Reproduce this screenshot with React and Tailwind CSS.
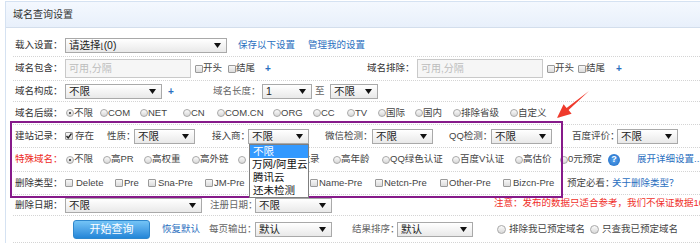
import React from "react";

const F = "font-['Liberation_Sans','Noto_Sans_CJK_SC',sans-serif]";
const LINK = "text-[#2a6fc0]";

function L({ w = "", className = "", children }) {
  return <span className={`shrink-0 whitespace-nowrap ${w} ${className}`}>{children}</span>;
}

function Arrow() {
  return (
    <svg width="7" height="5" viewBox="0 0 7 5" className="absolute right-[5px] top-[4px]">
      <polygon points="0,0 7,0 3.5,5" fill="#111" />
    </svg>
  );
}

function Sel({ w, children }) {
  return (
    <div className={`relative ${w} h-[15px] shrink-0 border border-[#a9a9a9] bg-linear-to-b from-white to-[#e9e9e9] text-[10.5px] leading-[13px] text-[#222] pl-[3px] whitespace-nowrap overflow-hidden`}>
      {children}
      <Arrow />
    </div>
  );
}

function Inp({ w }) {
  return (
    <div className={`${w} h-[19px] shrink-0 border border-[#c9c9c9] bg-[#f6f6f6] text-[#bdbdbd] text-[10px] pl-[3px] flex items-center`}>
      可用,分隔
    </div>
  );
}

function Radio({ on, big }) {
  return (
    <span className={`relative inline-block shrink-0 rounded-full border border-[#a8a8a8] bg-linear-to-b from-[#fbfbfb] to-[#d8d8d8] ${big ? "w-[9px] h-[9px]" : "w-[8px] h-[8px]"}`}>
      {on && <span className="absolute left-[2px] top-[2px] w-[2px] h-[2px] rounded-full bg-[#222]" />}
    </span>
  );
}

function Check({ on }) {
  return (
    <span className="relative inline-block w-[8px] h-[8px] shrink-0 rounded-[1px] border border-[#9a9a9a] bg-linear-to-b from-[#f7f7f7] to-[#dcdcdc]">
      {on && (
        <svg width="8" height="8" viewBox="0 0 8 8" className="absolute left-[-1px] top-[-1px]">
          <polyline points="1.5,4 3.2,6 6.5,1.5" fill="none" stroke="#222" strokeWidth="1.3" />
        </svg>
      )}
    </span>
  );
}

function RItem({ w = "", on, className = "", children }) {
  return (
    <span className={`flex items-center shrink-0 ${w} ${className}`}>
      <Radio on={on} />
      <span>{children}</span>
    </span>
  );
}

function CItem({ w = "", on, gap = "", className = "", children }) {
  return (
    <span className={`flex items-center shrink-0 ${w} ${className}`}>
      <Check on={on} />
      <span className={gap}>{children}</span>
    </span>
  );
}

function Plus({ w = "" }) {
  return <span className={`shrink-0 ${w} text-[#2a6fc0] text-[10px] font-bold`}>+</span>;
}

function Row({ h, pt = "", children }) {
  return (
    <div className={`flex items-center ${h} ${pt} pl-[2px] border-b border-dotted border-[#d4d4d4] whitespace-nowrap`}>
      {children}
    </div>
  );
}

export default function App() {
  return (
    <div className={`relative w-[700px] h-[245px] overflow-hidden bg-white text-[9.5px] text-[#444] ${F}`}>
      <div className="ml-[5px] mt-[1px] border-l border-t border-[#d5e2f2]">
        <div className="h-[26px] border-b border-[#d3deec] bg-linear-to-b from-[#f4f8fe] to-[#e8f0fb] pl-[7px] flex items-center text-[10px] text-[#333]">
          域名查询设置
        </div>
        <div className="ml-[7px]">
          {/* Row 1 */}
          <Row h="h-[29px]" pt="pt-[6px]">
            <L w="w-[50px]" className="text-[#333]">载入设置：</L>
            <Sel w="w-[162px]">
              请选择<span className="font-['DejaVu_Sans'] text-[8px]">⌊</span>(0)
            </Sel>
            <L w="w-[70px]" className={`ml-[11px] ${LINK}`}>保存以下设置</L>
            <L className={LINK}>管理我的设置</L>
          </Row>
          {/* Row 2 */}
          <Row h="h-[24px]">
            <L w="w-[50px]" className="text-[#333]">域名包含：</L>
            <Inp w="w-[126px]" />
            <CItem w="w-[33px]" className="ml-[4px]">开头</CItem>
            <CItem w="w-[37px]">结尾</CItem>
            <Plus w="w-[102px]" />
            <L w="w-[50px]" className="text-[#333]">域名排除：</L>
            <Inp w="w-[126px]" />
            <CItem w="w-[31px]" className="ml-[4px]">开头</CItem>
            <CItem w="w-[38px]">结尾</CItem>
            <Plus />
          </Row>
          {/* Row 3 */}
          <Row h="h-[21px]">
            <L w="w-[50px]" className="text-[#333]">域名构成：</L>
            <Sel w="w-[97px]">不限</Sel>
            <Plus w="w-[45px] ml-[6px]" />
            <L w="w-[49px]" className="text-[#666]">域名长度：</L>
            <Sel w="w-[50px]">1</Sel>
            <L w="w-[15px]" className="ml-[3px] text-[#666]">至</L>
            <Sel w="w-[48px]">不限</Sel>
          </Row>
          {/* Row 4 */}
          <Row h="h-[23px]">
            <L w="w-[51px]" className="text-[#333]">域名后缀：</L>
            <RItem w="w-[34px]" on>不限</RItem>
            <RItem w="w-[40px]">COM</RItem>
            <RItem w="w-[43px]">NET</RItem>
            <RItem w="w-[34px]">CN</RItem>
            <RItem w="w-[56px]">COM.CN</RItem>
            <RItem w="w-[40px]">ORG</RItem>
            <RItem w="w-[34px]">CC</RItem>
            <RItem w="w-[31px]">TV</RItem>
            <RItem w="w-[37px]">国际</RItem>
            <RItem w="w-[38px]">国内</RItem>
            <RItem w="w-[57px]">排除省级</RItem>
            <RItem>自定义</RItem>
          </Row>
          {/* Row 5 */}
          <Row h="h-[23px]">
            <L w="w-[50px]" className="text-[#333]">建站记录：</L>
            <CItem w="w-[42px]" on gap="ml-[2px]">存在</CItem>
            <L w="w-[27px]">性质：</L>
            <Sel w="w-[61px]">不限</Sel>
            <L w="w-[36px]" className="ml-[17px]">接入商：</L>
            <Sel w="w-[61px]">不限</Sel>
            <L w="w-[47px]" className="ml-[16px]">微信检测：</L>
            <Sel w="w-[61px]">不限</Sel>
            <L w="w-[42px]" className="ml-[16px]">QQ检测：</L>
            <Sel w="w-[61px]">不限</Sel>
            <L w="w-[45px]" className="ml-[20px]">百度评价：</L>
            <Sel w="w-[61px]">不限</Sel>
          </Row>
          {/* Row 6 */}
          <Row h="h-[24px]">
            <L w="w-[51px]" className="text-[#ee2b24]">特殊域名：</L>
            <RItem w="w-[37px]" on>不限</RItem>
            <RItem w="w-[41px]">高PR</RItem>
            <RItem w="w-[48px]">高权重</RItem>
            <RItem w="w-[46px]">高外链</RItem>
            <span className="shrink-0 w-[45px] flex items-center"><Radio /></span>
            <RItem w="w-[50px]">高收录</RItem>
            <RItem w="w-[49px]">高年龄</RItem>
            <RItem w="w-[70px]">QQ绿色认证</RItem>
            <RItem w="w-[63px]">百度V认证</RItem>
            <RItem w="w-[45px]">高估价</RItem>
            <RItem w="w-[48px]">0元预定</RItem>
            <span className="shrink-0 w-[12px] h-[12px] rounded-full bg-radial from-[#5aa6ee] to-[#1667c4] text-white text-[9px] font-bold flex items-center justify-center leading-none">?</span>
            <L className={`ml-[17px] ${LINK}`}>展开详细设置...</L>
          </Row>
          {/* Row 7 */}
          <Row h="h-[23px]">
            <L w="w-[50px]" className="text-[#333]">删除类型：</L>
            <CItem w="w-[50px]" gap="ml-[3px]">Delete</CItem>
            <CItem w="w-[33px]" gap="ml-[1px]">Pre</CItem>
            <CItem w="w-[57px]" gap="ml-[2px]">Sna-Pre</CItem>
            <CItem w="w-[52px]" gap="ml-[1px]">JM-Pre</CItem>
            <span className="shrink-0 w-[53px]" />
            <CItem w="w-[65px]" gap="ml-[1px]">Name-Pre</CItem>
            <CItem w="w-[65px]" gap="ml-[1px]">Netcn-Pre</CItem>
            <CItem w="w-[63px]" gap="ml-[1px]">Other-Pre</CItem>
            <CItem w="w-[64px]" gap="ml-[2px]">Bizcn-Pre</CItem>
            <L w="w-[45px]">预定必看：</L>
            <L className={LINK}>关于删除类型？</L>
          </Row>
          {/* Row 8 */}
          <Row h="h-[21px]">
            <L w="w-[50px]" className="text-[#333]">删除日期：</L>
            <Sel w="w-[137px]">不限</Sel>
            <L w="w-[45px]" className="ml-[8px] text-[#666]">注册日期：</L>
            <Sel w="w-[77px]">不限</Sel>
            <L className="ml-[162px] -mt-[3px] text-[#f0302a]">注意：发布的数据只适合参考，我们不保证数据100%准确！</L>
          </Row>
          {/* Row 9 */}
          <Row h="h-[27px]">
            <button className="ml-[58px] shrink-0 w-[77px] h-[19px] rounded-[3px] border border-[#2f87cc] bg-linear-to-b from-[#74c4f6] to-[#2286d8] text-white text-[11px] flex items-center justify-center">
              开始查询
            </button>
            <L w="w-[47px]" className={`ml-[12px] ${LINK}`}>恢复默认</L>
            <L w="w-[46px]" className="text-[#666]">每页输出：</L>
            <Sel w="w-[77px]">默认</Sel>
            <L w="w-[45px]" className="ml-[20px] text-[#666]">结果排序：</L>
            <Sel w="w-[76px]">默认</Sel>
            <span className="ml-[24px] flex items-center w-[93px] shrink-0">
              <Radio big />
              <span className="ml-[3px]">排除我已预定域名</span>
            </span>
            <span className="flex items-center shrink-0">
              <Radio big />
              <span className="ml-[3px]">只查我已预定域名</span>
            </span>
          </Row>
        </div>
      </div>

      {/* purple annotation box */}
      <div className="absolute left-[10px] top-[121px] w-[553px] h-[77px] border-2 border-[#861a8a] pointer-events-none" />

      {/* open dropdown list */}
      <div className="absolute left-[249px] top-[144px] w-[60px] overflow-hidden border border-[#7f7f7f] bg-white text-[10.5px] text-[#111] leading-[13px]">
        <div className="h-[13px] bg-[#3399ff] text-white pl-[3px]">不限</div>
        <div className="h-[13px] pl-[2px] whitespace-nowrap">万网/阿里云</div>
        <div className="h-[13px] pl-[3px]">腾讯云</div>
        <div className="h-[13px] pl-[3px]">还未检测</div>
      </div>

      {/* red arrow */}
      <svg className="absolute left-0 top-0 pointer-events-none" width="700" height="245" viewBox="0 0 700 245">
        <polygon points="589,91 568.6,110.1 571.6,113.8 557,118 563.6,104.2 566.6,107.9" fill="#ef3a2c" />
      </svg>
    </div>
  );
}
